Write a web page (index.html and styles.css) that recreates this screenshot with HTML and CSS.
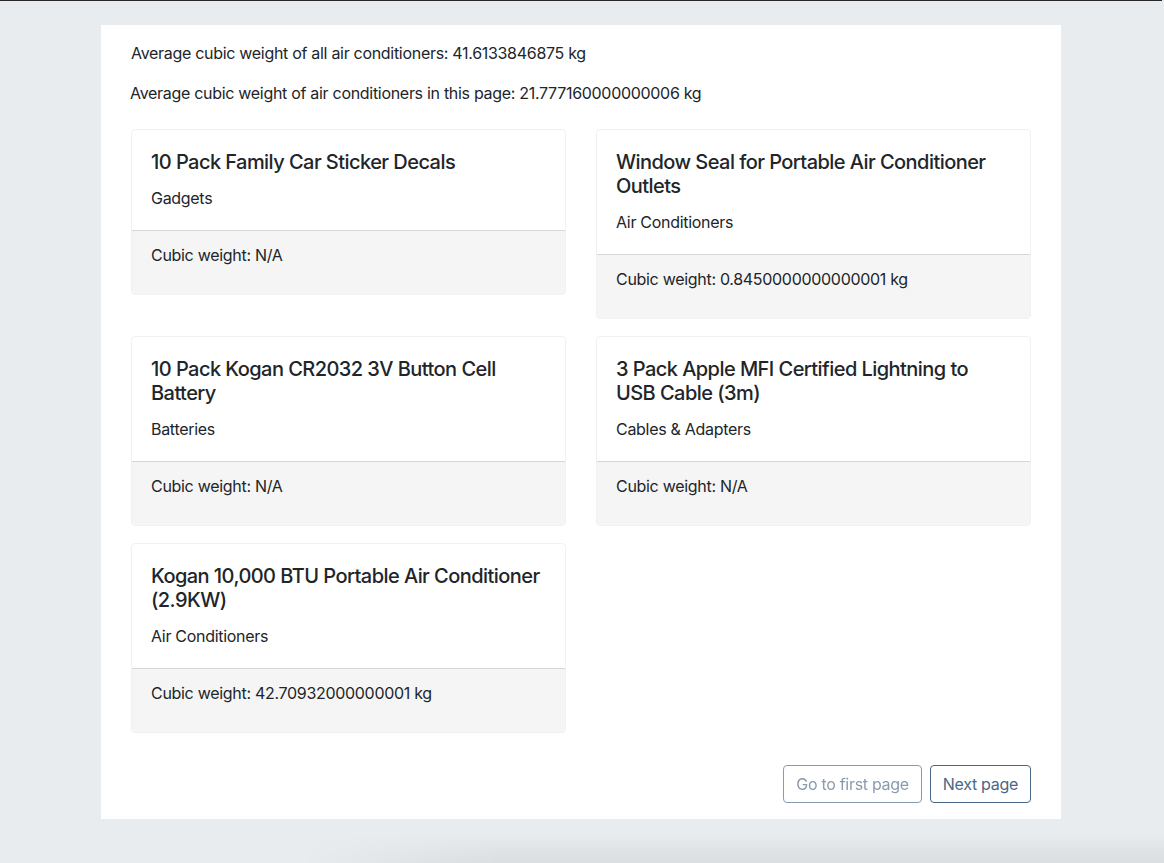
FILE: index.html
```html
<!DOCTYPE html>
<html>
<head>
<meta charset="utf-8">
<link rel="stylesheet" href="styles.css">
</head>
<body>
<div class="topline"></div>
<main class="container">
  <p class="avg avg-all">Average cubic weight of all air conditioners: 41.6133846875 kg</p>
  <p class="avg avg-page">Average cubic weight of air conditioners in this page: 21.777160000000006 kg</p>
  <div class="grid">
    <div class="card">
      <div class="card-body">
        <h5 class="card-title">10 Pack Family Car Sticker Decals</h5>
        <p class="card-text">Gadgets</p>
      </div>
      <div class="card-footer"><p>Cubic weight: N/A</p></div>
    </div>
    <div class="card">
      <div class="card-body">
        <h5 class="card-title">Window Seal for Portable Air Conditioner Outlets</h5>
        <p class="card-text">Air Conditioners</p>
      </div>
      <div class="card-footer"><p>Cubic weight: 0.8450000000000001 kg</p></div>
    </div>
    <div class="card">
      <div class="card-body">
        <h5 class="card-title">10 Pack Kogan CR2032 3V Button Cell Battery</h5>
        <p class="card-text">Batteries</p>
      </div>
      <div class="card-footer"><p>Cubic weight: N/A</p></div>
    </div>
    <div class="card">
      <div class="card-body">
        <h5 class="card-title">3 Pack Apple MFI Certified Lightning to USB Cable (3m)</h5>
        <p class="card-text">Cables &amp; Adapters</p>
      </div>
      <div class="card-footer"><p>Cubic weight: N/A</p></div>
    </div>
    <div class="card">
      <div class="card-body">
        <h5 class="card-title">Kogan 10,000 BTU Portable Air Conditioner (2.9KW)</h5>
        <p class="card-text">Air Conditioners</p>
      </div>
      <div class="card-footer"><p>Cubic weight: 42.70932000000001 kg</p></div>
    </div>
  </div>
  <div class="pager">
    <button class="btn disabled" disabled>Go to first page</button>
    <button class="btn">Next page</button>
  </div>
</main>
<div class="shadow"></div>
</body>
</html>
```

FILE: styles.css
```css
html, body {
  margin: 0;
  padding: 0;
}
body {
  background: #e9ecef;
  font-family: Inter, "Noto Sans", "Liberation Sans", sans-serif;
  font-size: 16px;
  line-height: 24px;
  letter-spacing: -0.3px;
  color: #212529;
  min-height: 863px;
  overflow: hidden;
  position: relative;
  padding-right: 2px;
  box-sizing: border-box;
}
.topline {
  height: 1px;
  background: #2b2626;
}
.container {
  width: 960px;
  box-sizing: border-box;
  margin: 24px auto 0;
  background: #fff;
  padding: 16px 30px 16px;
}
.avg {
  margin: 0 0 16px;
}
.avg-page {
  margin-left: -1px;
  margin-bottom: 24px;
}
.grid {
  display: grid;
  grid-template-columns: 1fr 1fr;
  column-gap: 30px;
  row-gap: 17px;
  align-items: start;
  margin-bottom: 32px;
}
.card {
  border: 1px solid #f1f1f1;
  border-radius: 4px;
  overflow: hidden;
}
.card-body {
  padding: 20px 19px 20px;
}
.card-title {
  margin: 0 0 12px;
  font-size: 20px;
  line-height: 24px;
  font-weight: 500;
  letter-spacing: -0.55px;
}
.card-text {
  margin: 0;
}
.card-footer {
  background: #f5f5f5;
  border-top: 1px solid #d6d6d6;
  padding: 12px 19px 11px;
}
.card-footer p {
  margin: 0 0 16px;
}
.pager {
  display: flex;
  justify-content: flex-end;
  gap: 8px;
}
.btn {
  font-family: inherit;
  font-size: 16px;
  line-height: 24px;
  letter-spacing: -0.3px;
  padding: 6px 12px;
  background: #fff;
  color: #4a6785;
  border: 1px solid #4a6785;
  border-radius: 4px;
  cursor: pointer;
}
.btn.disabled {
  opacity: 0.65;
  cursor: default;
}
.shadow {
  position: absolute;
  left: 300px;
  right: 0;
  bottom: 0;
  height: 30px;
  background: linear-gradient(to bottom, rgba(0,0,0,0), rgba(0,0,0,0.06));
  -webkit-mask-image: linear-gradient(to right, transparent, #000 200px);
  mask-image: linear-gradient(to right, transparent, #000 200px);
  pointer-events: none;
}
```
